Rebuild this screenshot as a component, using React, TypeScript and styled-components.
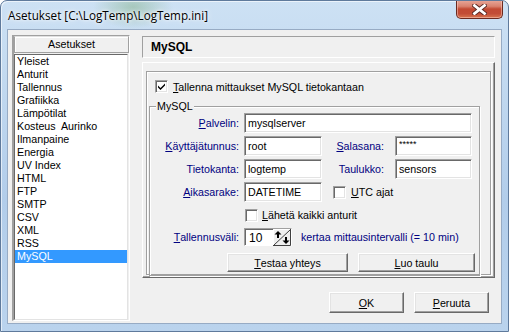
import styled, { createGlobalStyle } from "styled-components";

const GlobalStyle = createGlobalStyle`
  html, body {
    margin: 0;
    padding: 0;
    background: #ffffff;
  }
  body {
    font-family: "Liberation Sans", Arial, sans-serif;
    font-size: 11px;
  }
`;

const items = [
  "Yleiset",
  "Anturit",
  "Tallennus",
  "Grafiikka",
  "Lämpötilat",
  "Kosteus  Aurinko",
  "Ilmanpaine",
  "Energia",
  "UV Index",
  "HTML",
  "FTP",
  "SMTP",
  "CSV",
  "XML",
  "RSS",
  "MySQL",
];

const CloseGlyph = () => (
  <svg width="15" height="11" viewBox="0 0 15 11">
    <path d="M2.5 1.5 L12.5 9.5 M12.5 1.5 L2.5 9.5" stroke="#5a2a24" strokeWidth="4.6" strokeLinecap="square" />
    <path d="M2.5 1.5 L12.5 9.5 M12.5 1.5 L2.5 9.5" stroke="#ffffff" strokeWidth="2.8" strokeLinecap="square" />
  </svg>
);

const CheckMark = () => (
  <svg width="9" height="9" viewBox="0 0 9 9">
    <path d="M1 3.5 L3.5 6 L8 1.5 L8 3.5 L3.5 8 L1 5.5 Z" fill="#000" />
  </svg>
);

const SpinGlyph = () => (
  <svg width="18" height="17" viewBox="0 0 18 17">
    <rect x="0" y="0" width="18" height="17" fill="#f0f0f0" />
    <path d="M0 16.5 H17.5 V0" stroke="#404040" fill="none" />
    <path d="M0.5 16 V0.5 H17" stroke="#ffffff" fill="none" />
    <path d="M1 16 L17 1" stroke="#404040" strokeWidth="1" />
    <path d="M1.5 5.5 L5 2 L8.5 5.5 Z" fill="#000" />
    <rect x="4" y="4" width="2" height="5" fill="#000" />
    <path d="M9.5 11.5 L13 15 L16.5 11.5 Z" fill="#000" />
    <rect x="12" y="8" width="2" height="5" fill="#000" />
  </svg>
);

const App = () => {
  return (
    <>
      <GlobalStyle />
      <Window>
        <TitleBar>
          <TitleText>Asetukset [C:\LogTemp\LogTemp.ini]</TitleText>
          <CloseButton>
            <CloseGlyph />
          </CloseButton>
        </TitleBar>
        <Client>
          <LeftPanel>
            <ListHeader>Asetukset</ListHeader>
            <List>
              {items.map((item) => (
                <ListItem key={item} $selected={item === "MySQL"}>
                  {item}
                </ListItem>
              ))}
            </List>
          </LeftPanel>
          <RightColumn>
            <PageHeader>MySQL</PageHeader>
            <PagePanel>
              <OuterGroup>
                <CheckRow>
                  <CheckBox>
                    <CheckMark />
                  </CheckBox>
                  <span>
                    <Acc>T</Acc>allenna mittaukset MySQL tietokantaan
                  </span>
                </CheckRow>
                <GroupBox>
                  <GroupLegend>MySQL</GroupLegend>
                  <FormGrid>
                    <FieldLabel>
                      <Acc>P</Acc>alvelin:
                    </FieldLabel>
                    <TextBox $span={3}>mysqlserver</TextBox>

                    <FieldLabel>
                      <Acc>K</Acc>äyttäjätunnus:
                    </FieldLabel>
                    <TextBox>root</TextBox>
                    <FieldLabel $second>
                      <Acc>S</Acc>alasana:
                    </FieldLabel>
                    <TextBox $masked>*****</TextBox>

                    <FieldLabel>Tietokanta:</FieldLabel>
                    <TextBox>logtemp</TextBox>
                    <FieldLabel $second>Taulukko:</FieldLabel>
                    <TextBox>sensors</TextBox>

                    <FieldLabel>
                      <Acc>A</Acc>ikasarake:
                    </FieldLabel>
                    <TextBox>DATETIME</TextBox>
                    <InlineCheck $span={2}>
                      <CheckBox />
                      <span>
                        <Acc>U</Acc>TC ajat
                      </span>
                    </InlineCheck>
                  </FormGrid>
                  <SendRow>
                    <CheckBox />
                    <span>
                      <Acc>L</Acc>ähetä kaikki anturit
                    </span>
                  </SendRow>
                  <IntervalRow>
                    <FieldLabel>
                      <Acc>T</Acc>allennusväli:
                    </FieldLabel>
                    <SpinEdit>
                      <SpinValue>10</SpinValue>
                      <SpinGlyph />
                    </SpinEdit>
                    <HintText>kertaa mittausintervalli (= 10 min)</HintText>
                  </IntervalRow>
                  <ActionRow>
                    <PushButton $width={121}>
                      <Acc>T</Acc>estaa yhteys
                    </PushButton>
                    <PushButton $width={117}>
                      <Acc>L</Acc>uo taulu
                    </PushButton>
                  </ActionRow>
                </GroupBox>
              </OuterGroup>
            </PagePanel>
            <Footer>
              <PushButton $width={75} $height={21}>
                <Acc>O</Acc>K
              </PushButton>
              <PushButton $width={75} $height={21}>
                <Acc>P</Acc>eruuta
              </PushButton>
            </Footer>
          </RightColumn>
        </Client>
      </Window>
    </>
  );
};

const Window = styled.div`
  width: 509px;
  height: 332px;
  box-sizing: border-box;
  display: flex;
  flex-direction: column;
  border: 1px solid #5f7a9c;
  border-radius: 7px 7px 0 0;
  overflow: hidden;
  background:
    radial-gradient(ellipse 40px 22px at 132px 6px, rgba(120, 170, 120, 0.45), transparent),
    linear-gradient(180deg, #cde1f4 0%, #bfd7ef 30%, #b2cdea 60%, #bad3ed 100%);
  box-shadow: inset 1px 1px 0 rgba(255, 255, 255, 0.6);
`;

const TitleBar = styled.div`
  height: 28px;
  flex-shrink: 0;
  display: flex;
  align-items: flex-start;
  justify-content: space-between;
  padding: 0 5px 0 7px;
`;

const TitleText = styled.div`
  margin-top: 7px;
  font-family: "Open Sans", "Noto Sans", sans-serif;
  font-size: 11.7px;
  line-height: 15px;
  color: #000;
  text-shadow: 0 0 6px #ffffff, 0 0 3px #ffffff;
`;

const CloseButton = styled.div`
  width: 47px;
  height: 19px;
  margin-top: -1px;
  box-sizing: border-box;
  display: flex;
  align-items: center;
  justify-content: center;
  border: 1px solid #6b2a20;
  border-top: none;
  border-radius: 0 0 5px 5px;
  background: linear-gradient(180deg, #e9a99b 0%, #d9826f 35%, #c24a33 50%, #c24c36 75%, #d7744e 100%);
  box-shadow: inset 0 0 0 1px rgba(255, 210, 200, 0.5);
`;

const Client = styled.div`
  flex: 1;
  display: flex;
  margin: 0 6px 7px 6px;
  padding: 5px 6px 0 4px;
  border: 1px solid #97abc4;
  background: #f0f0f0;
  font-family: "Liberation Sans", Arial, sans-serif;
  font-size: 10.7px;
  color: #000;
`;

const LeftPanel = styled.div`
  width: 118px;
  margin-bottom: 2px;
  box-sizing: border-box;
  display: flex;
  flex-direction: column;
  border-left: 2px solid #a0a0a0;
  border-top: 1px solid #a0a0a0;
  border-right: 1px solid #ffffff;
  border-bottom: 1px solid #ffffff;
`;

const ListHeader = styled.div`
  height: 17px;
  box-sizing: border-box;
  text-align: center;
  line-height: 15px;
  border: 1px solid #a0a0a0;
  border-top-color: #e0e0e0;
  box-shadow: inset 1px 1px 0 #ffffff;
  background: #f0f0f0;
`;

const List = styled.div`
  flex: 1;
  margin-top: 1px;
  margin-right: 1px;
  box-sizing: border-box;
  background: #ffffff;
  border-top: 1px solid #696969;
  border-left: 1px solid #696969;
  border-right: 1px solid #e3e3e3;
  border-bottom: 1px solid #e3e3e3;
`;

const ListItem = styled.div<{ $selected?: boolean }>`
  height: 13px;
  line-height: 13px;
  padding-left: 2px;
  white-space: pre;
  background: ${(p) => (p.$selected ? "#3399ff" : "transparent")};
  color: ${(p) => (p.$selected ? "#ffffff" : "#000000")};
`;

const RightColumn = styled.div`
  flex: 1;
  margin-left: 12px;
  display: flex;
  flex-direction: column;
`;

const PageHeader = styled.div`
  height: 22px;
  margin-top: 1px;
  box-sizing: border-box;
  padding-left: 8px;
  display: flex;
  align-items: center;
  font-weight: bold;
  font-size: 12px;
  border-top: 1px solid #a0a0a0;
  border-left: 1px solid #a0a0a0;
  border-right: 1px solid #ffffff;
  border-bottom: 1px solid #ffffff;
`;

const PagePanel = styled.div`
  height: 216px;
  margin-top: 4px;
  box-sizing: border-box;
  padding: 8px 3px 2px 3px;
  border-top: 1px solid #ffffff;
  border-left: 1px solid #ffffff;
  border-right: 1px solid #696969;
  border-bottom: 1px solid #696969;
  box-shadow: inset -1px -1px 0 #a0a0a0;
`;

const OuterGroup = styled.div`
  height: 100%;
  box-sizing: border-box;
  padding: 8px 10px 2px 2px;
  border: 1px solid #a0a0a0;
  box-shadow: inset 1px 1px 0 #ffffff, 1px 1px 0 #ffffff;
`;

const CheckRow = styled.div`
  display: flex;
  align-items: center;
  gap: 5px;
  margin-left: 6px;
  height: 13px;
  margin-bottom: 13px;
`;

const CheckBox = styled.div`
  width: 13px;
  height: 13px;
  flex-shrink: 0;
  box-sizing: border-box;
  display: flex;
  align-items: center;
  justify-content: center;
  background: #ffffff;
  border-top: 1px solid #a0a0a0;
  border-left: 1px solid #a0a0a0;
  border-right: 1px solid #ffffff;
  border-bottom: 1px solid #ffffff;
  box-shadow: inset 1px 1px 0 #696969, inset -1px -1px 0 #e3e3e3;
`;

const Acc = styled.span`
  text-decoration: underline;
  text-underline-offset: 1px;
`;

const GroupBox = styled.div`
  position: relative;
  box-sizing: border-box;
  border: 1px solid #a0a0a0;
  box-shadow: inset 1px 1px 0 #ffffff, 1px 1px 0 #ffffff;
  padding: 6px 4px 3px 0;
`;

const GroupLegend = styled.span`
  position: absolute;
  top: -7px;
  left: 6px;
  padding: 0 1px;
  line-height: 13px;
  background: #f0f0f0;
`;

const FormGrid = styled.div`
  display: grid;
  grid-template-columns: 94px 78px 73px 77px;
  grid-auto-rows: 20px;
  row-gap: 3px;
`;

const FieldLabel = styled.div<{ $second?: boolean }>`
  display: flex;
  align-items: center;
  justify-content: flex-end;
  padding-right: ${(p) => (p.$second ? "11px" : "5px")};
  color: #000080;
  white-space: nowrap;
`;

const TextBox = styled.div<{ $span?: number; $masked?: boolean }>`
  grid-column: span ${(p) => p.$span ?? 1};
  box-sizing: border-box;
  height: 20px;
  display: flex;
  align-items: ${(p) => (p.$masked ? "flex-start" : "center")};
  padding: ${(p) => (p.$masked ? "2px 3px 0" : "0 3px")};
  font-size: ${(p) => (p.$masked ? "9px" : "10.7px")};
  background: #ffffff;
  border-top: 1px solid #a0a0a0;
  border-left: 1px solid #a0a0a0;
  border-right: 1px solid #ffffff;
  border-bottom: 1px solid #ffffff;
  box-shadow: inset 1px 1px 0 #696969, inset -1px -1px 0 #e3e3e3;
`;

const InlineCheck = styled.div<{ $span?: number }>`
  grid-column: span ${(p) => p.$span ?? 1};
  display: flex;
  align-items: center;
  gap: 5px;
  padding-left: 11px;
`;

const SendRow = styled.div`
  display: flex;
  align-items: center;
  gap: 4px;
  margin: 6px 0 0 95px;
  height: 14px;
`;

const IntervalRow = styled.div`
  display: grid;
  grid-template-columns: 94px auto auto;
  align-items: center;
  justify-content: start;
  margin-top: 6px;
  height: 18px;
`;

const SpinEdit = styled.div`
  width: 48px;
  height: 18px;
  box-sizing: border-box;
  display: flex;
  align-items: center;
  background: #ffffff;
  border-top: 1px solid #a0a0a0;
  border-left: 1px solid #a0a0a0;
  border-right: 1px solid #ffffff;
  border-bottom: 1px solid #ffffff;
  box-shadow: inset 1px 1px 0 #696969;
  padding: 1px 0 0 1px;
`;

const SpinValue = styled.div`
  flex: 1;
  padding-left: 3px;
  font-size: 12px;
`;

const HintText = styled.div`
  margin-left: 9px;
  color: #000080;
  white-space: nowrap;
`;

const ActionRow = styled.div`
  display: flex;
  gap: 10px;
  margin: 7px 0 0 77px;
`;

const PushButton = styled.div<{ $width: number; $height?: number }>`
  width: ${(p) => p.$width}px;
  height: ${(p) => p.$height ?? 19}px;
  box-sizing: border-box;
  display: flex;
  align-items: center;
  justify-content: center;
  background: #f0f0f0;
  border-top: 1px solid #ffffff;
  border-left: 1px solid #ffffff;
  border-right: 1px solid #696969;
  border-bottom: 1px solid #696969;
  box-shadow: inset -1px -1px 0 #a0a0a0, inset 1px 1px 0 #e3e3e3;
  color: #000;
`;

const Footer = styled.div`
  display: flex;
  justify-content: flex-end;
  gap: 10px;
  padding: 14px 6px 0 0;
`;

export default App;
